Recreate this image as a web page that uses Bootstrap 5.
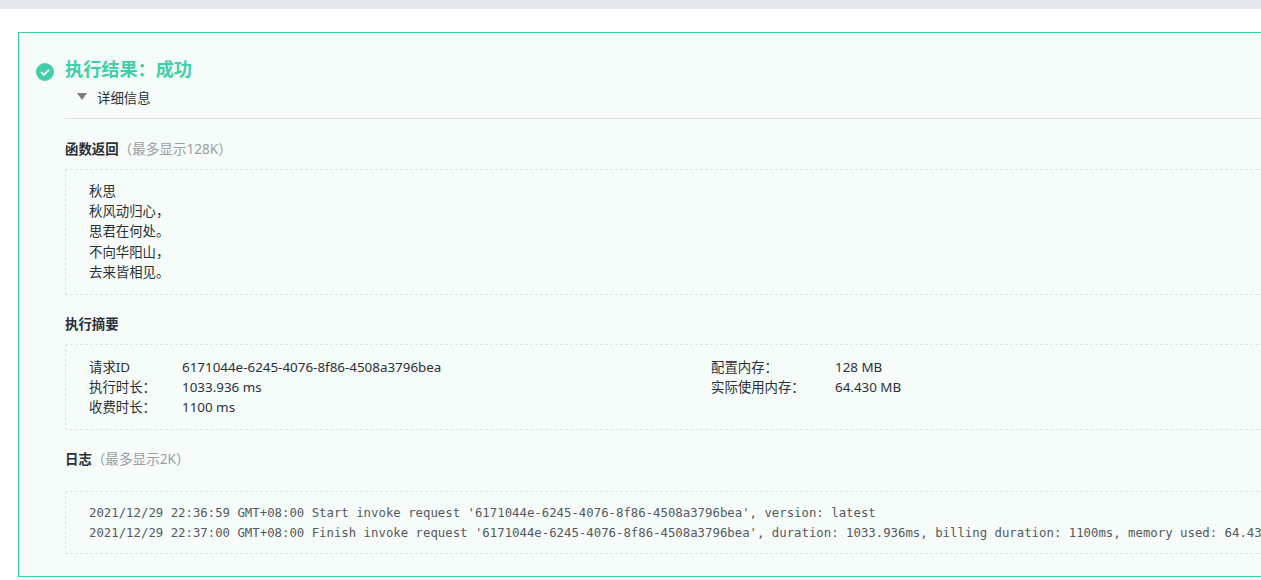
<!DOCTYPE html>
<html lang="zh-CN">
<head>
<meta charset="utf-8">
<title>执行结果</title>
<link rel="stylesheet" href="https://cdn.jsdelivr.net/npm/bootstrap@5.3.0/dist/css/bootstrap.min.css">
<style>
html,body{height:580px;overflow:hidden;background:#fff}
body{font-family:"Noto Sans","Noto Sans CJK SC",sans-serif;font-size:13.4px;color:#2b3038;line-height:20.2px}
.topstrip{height:9px;background:#e6e8ee}
.resultpanel{margin:23px 0 0 18px;width:1300px;height:545px;border:1px solid #34d0a4;background:#f6fcfa;padding:24px 0 0 46px;position:relative;border-right:0}
.okicon{position:absolute;left:17px;top:30px;width:18px;height:18px}
.restitle{font-size:18.15px;font-weight:700;color:#40cfa6;line-height:24px}
.detailtoggle{margin:6px 0 5px 12px;gap:10px;height:26px;padding-bottom:4px}
.tri{width:0;height:0;border-left:5px solid transparent;border-right:5px solid transparent;border-top:7px solid #7d7d7d;margin-top:-3px}
.rule{border-top:1px solid #dfe2e3;margin-bottom:20px}
.sechead{font-weight:700;line-height:20px;height:20px}
.sechead span{font-weight:400;color:#9a9ea3;font-size:13.6px}
.dashbox{border:1px dashed #dfe5e3;border-right:0;margin-top:10px;padding:12px 0 12px 23px}
.poem{height:126px;padding-top:11px}
.summary{height:86px;margin-bottom:19px;padding-top:12px;line-height:20px}
.kv{width:622px}
.kl{width:93px}
.kl2{width:124px}
.logbox{margin-top:22px;height:63px;padding-top:11px;font-family:"DejaVu Sans Mono",monospace;font-size:12.33px;color:#55595f;white-space:nowrap;line-height:20px}
.gapsec{margin-top:19px}
.footstrip{height:3px;margin-left:18px;background:#f6fafa}
</style>
</head>
<body>
<div class="topstrip"></div>
<div class="resultpanel">
  <svg class="okicon" viewBox="0 0 18 18" aria-hidden="true"><circle cx="9" cy="9" r="9" fill="#40cfa6"/><path d="M5 9.2l2.8 2.6L13 6.8" fill="none" stroke="#fff" stroke-width="1.8"/></svg>
  <div class="restitle">执行结果&#xFF1A;成功</div>
  <div class="detailtoggle d-flex align-items-center"><i class="tri"></i><span>详细信息</span></div>
  <div class="rule"></div>
  <div class="sechead">函数返回<span>&#xFF08;最多显示128K&#xFF09;</span></div>
  <div class="dashbox poem">秋思<br>秋风动归心&#xFF0C;<br>思君在何处。<br>不向华阳山&#xFF0C;<br>去来皆相见。</div>
  <div class="sechead gapsec">执行摘要</div>
  <div class="dashbox summary d-flex">
    <div class="kv">
      <div class="d-flex"><div class="kl">请求ID</div><div>6171044e-6245-4076-8f86-4508a3796bea</div></div>
      <div class="d-flex"><div class="kl">执行时长&#xFF1A;</div><div>1033.936 ms</div></div>
      <div class="d-flex"><div class="kl">收费时长&#xFF1A;</div><div>1100 ms</div></div>
    </div>
    <div>
      <div class="d-flex"><div class="kl2">配置内存&#xFF1A;</div><div>128 MB</div></div>
      <div class="d-flex"><div class="kl2">实际使用内存&#xFF1A;</div><div>64.430 MB</div></div>
    </div>
  </div>
  <div class="sechead">日志<span>&#xFF08;最多显示2K&#xFF09;</span></div>
  <div class="dashbox logbox">2021/12/29 22:36:59 GMT+08:00 Start invoke request '6171044e-6245-4076-8f86-4508a3796bea', version: latest<br>2021/12/29 22:37:00 GMT+08:00 Finish invoke request '6171044e-6245-4076-8f86-4508a3796bea', duration: 1033.936ms, billing duration: 1100ms, memory used: 64.430MB</div>
</div>
<div class="footstrip"></div>
</body>
</html>
